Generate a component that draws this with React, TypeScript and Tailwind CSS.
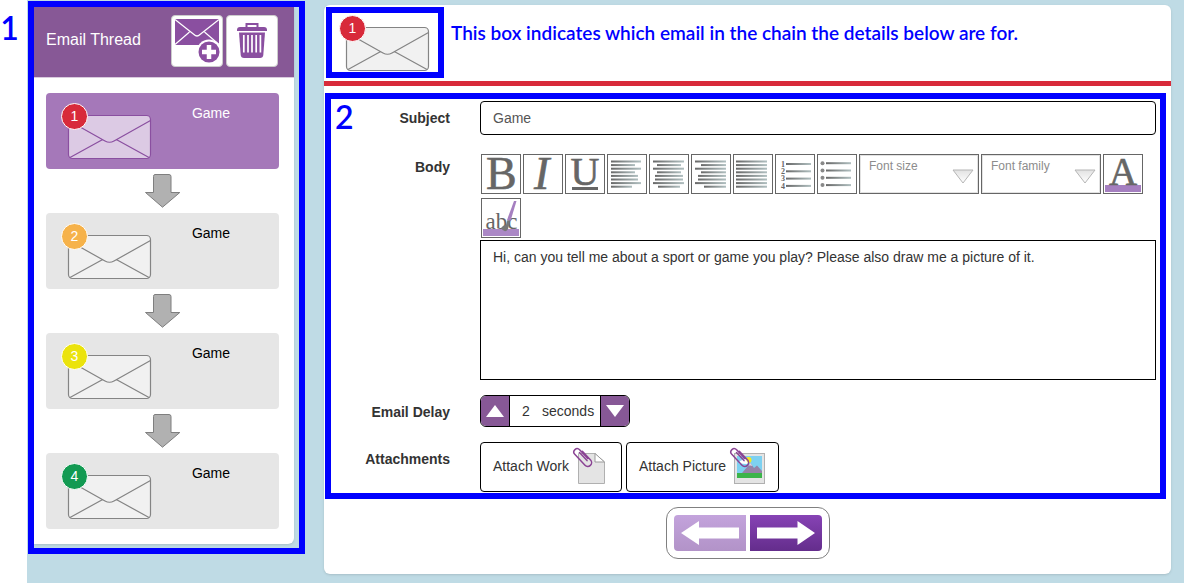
import { ReactNode, useState } from 'react'

const emails = [
  { id: 1, title: 'Game', badge: 'bg-[#d82a3a]' },
  { id: 2, title: 'Game', badge: 'bg-[#f6b24a]' },
  { id: 3, title: 'Game', badge: 'bg-[#ebe30c]' },
  { id: 4, title: 'Game', badge: 'bg-[#129a52]' },
]

function Envelope({ num, badge, active = false }: { num: number; badge: string; active?: boolean }) {
  return (
    <span className="relative block w-[92px] h-[57px] shrink-0">
      <svg
        width="92"
        height="57"
        viewBox="0 0 92 57"
        fill={active ? '#dccae4' : '#f1f1f1'}
        stroke={active ? '#8a4fa0' : '#848484'}
        strokeWidth="1.2"
      >
        <rect x="7.5" y="12.5" width="82" height="43" rx="4" />
        <path fill="none" d="M7.5 17.5L44 38Q48.5 40.5 53 38L89.5 17.5M9 54.5L41.7 36.5M88 54.5L55.3 36.5" />
      </svg>
      <span
        className={`absolute left-0 top-0 w-[27px] h-[27px] rounded-full border border-white text-white text-sm leading-[25px] text-center ${badge}`}
      >
        {num}
      </span>
    </span>
  )
}

function DownArrow() {
  return (
    <div className="h-11 pt-[5px] flex justify-center">
      <svg width="36" height="34" viewBox="0 0 36 34">
        <path
          d="M10 .5H24Q26 .5 26 2.5V18.5H34.8L17.5 33.2L.5 18.500H8.500V2.500Q8.500 .5 10 .5Z"
          fill="#b1b1b1"
          stroke="#7f7f7f"
        />
      </svg>
    </div>
  )
}

function AddEmailIcon() {
  return (
    <svg width="50" height="50" viewBox="1 1 50 50">
      <rect x="4" y="4" width="44" height="26" fill="#8a4fa0" />
      <path d="M4 4.500L23 19.500Q26 22.500 29 19.500L48 4.500M4 29.500L18.500 17M48 29.500L33.500 17" fill="none" stroke="#fff" strokeWidth="1.2" />
      <circle cx="38" cy="37" r="12.500" fill="#fff" />
      <circle cx="38" cy="37" r="10.500" fill="#8a4fa0" />
      <path d="M31 37H45M38 30V44" stroke="#fff" strokeWidth="4.500" />
    </svg>
  )
}

function TrashIcon() {
  return (
    <svg width="50" height="50" viewBox="1 1 50 50">
      <path d="M20.500 12.500V9H31.500V12.500" fill="none" stroke="#8a4fa0" strokeWidth="2" />
      <path d="M11 16V15Q11 12 14 12H38Q41 12 41 15V16Z" fill="#8a4fa0" />
      <path d="M13 17.500H39L37.300 40Q37 43 34 43H18Q15 43 14.700 40Z" fill="#8a4fa0" />
      <path d="M17.800 20V37.500M22 20V37.500M26 20V37.500M30.200 20V37.500M34.400 20V37.500" stroke="#fff" strokeWidth="1.700" />
    </svg>
  )
}

function Tool({ label, children }: { label: string; children: ReactNode }) {
  return (
    <button type="button" aria-label={label} className="w-10 h-10 border border-[#666] bg-white">
      <svg
        width="38"
        height="38"
        viewBox="1 1 38 38"
        fill="#666"
        fontFamily="Liberation Serif, serif"
        className="overflow-visible"
      >
        <defs>
          <linearGradient id="rule">
            <stop offset="0" stopColor="#686868" />
            <stop offset="1" stopColor="#b0bfc0" />
          </linearGradient>
        </defs>
        {children}
      </svg>
    </button>
  )
}

function Rules({ lines, gap }: { lines: number[][]; gap: number }) {
  return (
    <g fill="url(#rule)">
      {lines.map(([x, end], i) => (
        <rect key={i} x={x} y={6.5 + i * gap} width={end - x} height="2" />
      ))}
    </g>
  )
}

const left = [[4, 34], [4, 28], [4, 34], [4, 28], [4, 31], [4, 31], [4, 34], [4, 25]]
const center = [[4, 35], [8, 32], [4, 35], [8, 32], [6, 34], [6, 34], [4, 35], [9, 31]]
const right = [[4, 35], [10, 35], [4, 35], [10, 35], [7, 35], [7, 35], [4, 35], [13, 35]]
const full = [[3, 34], [3, 34], [3, 34], [3, 34], [3, 34], [3, 34], [3, 34], [3, 34]]

function FontSelect({ label }: { label: string }) {
  return (
    <div className="relative w-[120px] h-10">
      <select
        aria-label={label}
        className="block appearance-none w-full h-full pl-[9px] pb-[17px] border border-[#666] bg-white text-xs text-[#8c8c8c] shadow-[inset_0_0_0_1px_#e2e2e2]"
      >
        <option>{label}</option>
      </select>
      <svg className="absolute right-[5px] top-[15px] pointer-events-none" width="22" height="16" viewBox="0 0 22 16">
        <defs>
          <linearGradient id="drop" x2="0" y2="1">
            <stop offset="0" stopColor="#e2e2e2" />
            <stop offset="1" stopColor="#fff" />
          </linearGradient>
        </defs>
        <path d="M1 1H21L11 14Z" fill="url(#drop)" stroke="#b5b5b5" />
      </svg>
    </div>
  )
}

function Clip() {
  return (
    <path
      transform="translate(11 12.500) rotate(47)"
      d="M-6 -.8H5M-5 -3.800H7a3.800 3.800 0 0 1 0 7.600H-8a3.300 3.300 0 0 1 0 -6.600H4"
      fill="none"
      stroke="#8a4394"
      strokeWidth="1.500"
      strokeLinecap="round"
    />
  )
}

function WorkIcon() {
  return (
    <svg width="36" height="42" viewBox="0 0 36 42">
      <path d="M6.500 8.500H23L32.500 17V38.500H6.500Z" fill="#e4e4e4" stroke="#b0b0b0" />
      <path d="M23 8.500V17H32.500Z" fill="#fff" stroke="#999" />
      <Clip />
    </svg>
  )
}

function PictureIcon() {
  return (
    <svg width="36" height="42" viewBox="0 0 36 42">
      <rect x="5.500" y="8.500" width="30" height="30" fill="#e4e4e4" stroke="#b0b0b0" />
      <rect x="8" y="11" width="25" height="22" fill="#7dd1f1" />
      <circle cx="19.500" cy="15" r="3" fill="#f5e820" />
      <path d="M10 18.500a2.500 2.500 0 0 1 2.500 -3a3 3 0 0 1 5.500 1a1.500 1.500 0 0 1 0 2.500Z" fill="#fff" />
      <path d="M13 28L21.500 18L25 23L28 20.500L33 26V28Z" fill="#9682a8" />
      <path d="M19.500 20.500L21.500 18L23.500 21L21.500 20.500Z" fill="#ddd5e2" />
      <rect x="8" y="28" width="25" height="5" fill="#3cb44a" />
      <Clip />
    </svg>
  )
}

const labelClass = 'text-sm leading-5 font-bold text-right text-[#333]'
const attachClass = 'h-[50px] pl-3 pr-[13px] pb-0.5 flex items-center border border-black rounded bg-white text-sm text-[#333]'

export default function App() {
  const [selected, setSelected] = useState(1)
  const [delay, setDelay] = useState(2)
  const current = emails[selected - 1]

  return (
    <div className="min-h-screen flex bg-white font-['Liberation_Sans',Arial,sans-serif]">
      {/* Step marker */}
      <div className="w-[27px] shrink-0 pt-2 font-[Lato,sans-serif] font-semibold text-[32px] leading-10 text-center text-[#0000ff] pr-2">
        1
      </div>

      <div className="flex-1 min-w-0 flex items-start bg-[#bfdbe5] pl-px pr-[13px] pb-2">
        {/* Email thread */}
        <aside className="w-[277px] shrink-0 mt-px border-6 border-[#0000ff] pr-[5px] pb-1">
          <div className="bg-white rounded-br-md shadow-sm pb-[15px]">
            <header className="h-[71px] flex items-center gap-[3px] pl-3 pr-4 pb-0.5 bg-[#875896] border-b border-[#d9cade]">
              <h2 className="flex-1 text-base leading-5 text-white pb-0.5">Email Thread</h2>
              <button type="button" aria-label="Add email" className="w-[52px] h-[52px] bg-white border border-[#ccc] rounded">
                <AddEmailIcon />
              </button>
              <button type="button" aria-label="Delete email" className="w-[52px] h-[52px] bg-white border border-[#ccc] rounded">
                <TrashIcon />
              </button>
            </header>

            <div className="pl-3 pr-[15px] pt-[15px]">
              {emails.map((email, i) => (
                <div key={email.id}>
                  {i > 0 && <DownArrow />}
                  <button
                    type="button"
                    onClick={() => setSelected(email.id)}
                    className={`w-full h-[76px] pl-[15px] pr-2.5 pt-2.5 flex items-start rounded text-sm leading-5 ${
                      email.id === selected ? 'bg-[#a578b9] text-white' : 'bg-[#e6e6e6] text-black'
                    }`}
                  >
                    <Envelope num={email.id} badge={email.badge} active={email.id === selected} />
                    <span className="flex-1 text-center">{email.title}</span>
                  </button>
                </div>
              ))}
            </div>
          </div>
        </aside>

        {/* Email details */}
        <main className="flex-1 min-w-0 ml-[19px] mt-[5px] pb-[15px] bg-white rounded-md shadow-sm">
          <div className="flex items-start pt-0.5 pl-0.5 pb-[3px] border-b-5 border-[#d82a3a]">
            <div className="w-[118px] h-[71px] shrink-0 border-6 border-[#0000ff] pl-[7px] pt-0.5">
              <Envelope num={current.id} badge={current.badge} />
            </div>
            <p className="pl-[7px] pt-3.5 font-[Lato,sans-serif] font-semibold text-[19px] leading-6 text-[#0000ff]">
              This box indicates which email in the chain the details below are for.
            </p>
          </div>

          <form
            className="relative mt-[7px] ml-px mr-[5px] border-6 border-[#0000ff] pt-0.5 pr-1 pb-px grid grid-cols-[119px_1fr] gap-x-[30px]"
            onSubmit={(e) => e.preventDefault()}
          >
            <span className="absolute left-1 top-0 font-[Lato,sans-serif] font-semibold text-[32px] leading-9 text-[#0000ff]">2</span>

            <label htmlFor="subject" className={`${labelClass} pt-[7px]`}>Subject</label>
            <input
              id="subject"
              defaultValue="Game"
              className="w-full h-[34px] px-3 border border-black rounded text-sm text-[#555]"
            />

            <label htmlFor="body" className={`${labelClass} mt-[19px] pt-[3px]`}>Body</label>
            <div className="mt-[19px]">
              <div className="flex flex-wrap gap-x-0.5 gap-y-1 pl-px pb-0.5">
                <Tool label="Bold"><text x="5" y="35" fontSize="46" stroke="#666" strokeWidth=".6">B</text></Tool>
                <Tool label="Italic"><text x="11" y="35" fontSize="46" fontStyle="italic" stroke="#666" strokeWidth=".6">I</text></Tool>
                <Tool label="Underline">
                  <text x="5.500" y="31" fontSize="40" stroke="#666" strokeWidth=".6">U</text>
                  <rect x="7" y="33" width="26" height="3" />
                </Tool>
                <Tool label="Align left"><Rules lines={left} gap={3.6} /></Tool>
                <Tool label="Align center"><Rules lines={center} gap={3.6} /></Tool>
                <Tool label="Align right"><Rules lines={right} gap={3.6} /></Tool>
                <Tool label="Justify"><Rules lines={full} gap={3.6} /></Tool>
                <Tool label="Numbered list">
                  {[1, 2, 3, 4].map((n) => (
                    <text key={n} x="6" y={5.5 + n * 7.3} fontSize="8" fontWeight="bold">{n}</text>
                  ))}
                  <g transform="translate(0 2.500)"><Rules lines={[[11, 36], [11, 36], [11, 36], [11, 36]]} gap={7.3} /></g>
                </Tool>
                <Tool label="Bulleted list">
                  {[0, 1, 2, 3].map((n) => (
                    <circle key={n} cx="5.500" cy={9.2 + n * 7.3} r="2" fill="#888" />
                  ))}
                  <g transform="translate(0 1.700)"><Rules lines={[[9, 34], [9, 34], [9, 34], [9, 34]]} gap={7.3} /></g>
                </Tool>
                <FontSelect label="Font size" />
                <FontSelect label="Font family" />
                <Tool label="Text colour">
                  <rect x="2" y="31" width="36" height="7" fill="#a57fc0" />
                  <text x="6" y="31" fontSize="39" stroke="#666" strokeWidth=".6">A</text>
                </Tool>
                <Tool label="Highlight colour">
                  <rect x="2" y="31" width="36" height="7" fill="#ab88c6" />
                  <text x="4.500" y="31" fontSize="23">abc</text>
                  <path d="M33 3H35.500L29.500 23L26 22Z" fill="#a57fc0" />
                  <path d="M26.500 22L29 23L27 31Q24 36 20 30Q22 27 25 27Z" fill="#777" />
                </Tool>
              </div>
              <textarea
                id="body"
                className="block w-full h-[140px] px-3 py-1.5 border border-black resize-none text-sm leading-5 text-[#333]"
                defaultValue="Hi, can you tell me about a sport or game you play? Please also draw me a picture of it."
              />
            </div>

            <label htmlFor="delay" className={`${labelClass} mt-[15px] pt-[7px]`}>Email Delay</label>
            <div className="mt-[15px] w-[150px] h-8 flex border border-black rounded-md overflow-hidden text-sm text-[#333]">
              <button
                type="button"
                aria-label="Increase delay"
                onClick={() => setDelay(delay + 1)}
                className="w-[29px] flex items-center justify-center bg-[#875896] border-r border-black"
              >
                <svg width="18" height="12" viewBox="0 0 18 12"><path d="M9 0L18 12H0Z" fill="#fff" /></svg>
              </button>
              <div className="flex-1 flex items-center pl-3">
                <input id="delay" value={delay} readOnly className="w-5" />
                <span>seconds</span>
              </div>
              <button
                type="button"
                aria-label="Decrease delay"
                onClick={() => setDelay(Math.max(0, delay - 1))}
                className="w-[29px] flex items-center justify-center bg-[#875896] border-l border-black"
              >
                <svg width="18" height="12" viewBox="0 0 18 12"><path d="M0 0H18L9 12Z" fill="#fff" /></svg>
              </button>
            </div>

            <span className={`${labelClass} mt-[15px] pt-[7px]`}>Attachments</span>
            <div className="mt-[15px] flex gap-1">
              <button type="button" className={`${attachClass} gap-[3px]`}>
                Attach Work
                <WorkIcon />
              </button>
              <button type="button" className={`${attachClass} gap-[3px]`}>
                Attach Picture
                <PictureIcon />
              </button>
            </div>
          </form>

          {/* Previous / next */}
          <nav className="mt-2 mx-auto w-[164px] h-[52px] p-[7px] flex gap-1 border border-[#808080] rounded-xl">
            <button
              type="button"
              aria-label="Previous"
              onClick={() => setSelected(Math.max(1, selected - 1))}
              className="w-[72px] h-9 rounded-l bg-linear-to-b from-[#c3a3dc] to-[#b293c8]"
            >
              <svg width="72" height="36" viewBox="0 0 72 36">
                <path d="M7 18L25 6V12.500H65V23.500H25V30Z" fill="#fff" />
              </svg>
            </button>
            <button
              type="button"
              aria-label="Next"
              onClick={() => setSelected(Math.min(emails.length, selected + 1))}
              className="w-[72px] h-9 rounded-r bg-linear-to-b from-[#8743b5] to-[#642d8c]"
            >
              <svg width="72" height="36" viewBox="0 0 72 36">
                <path d="M65 18L47.500 6V12.500H7V23.500H47.500V30Z" fill="#fff" />
              </svg>
            </button>
          </nav>
        </main>
      </div>
    </div>
  )
}
